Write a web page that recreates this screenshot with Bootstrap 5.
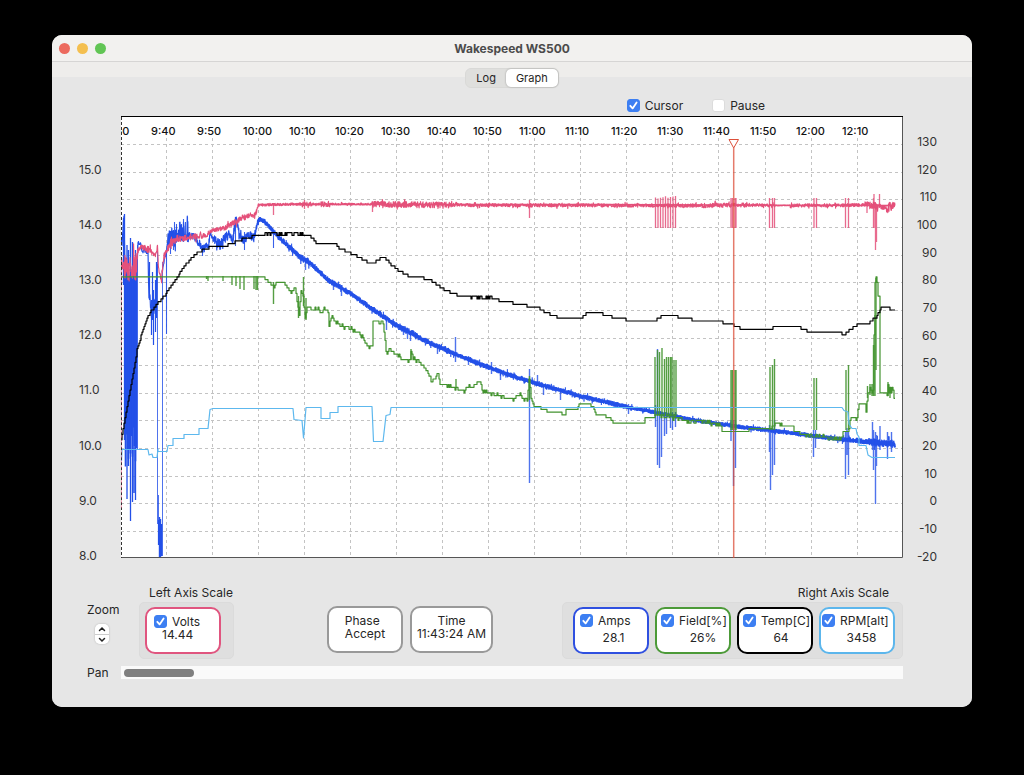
<!DOCTYPE html>
<html lang="en">
<head>
<meta charset="utf-8">
<meta name="viewport" content="width=device-width, initial-scale=1">
<title>Wakespeed WS500</title>
<link href="https://cdn.jsdelivr.net/npm/bootstrap@5.3.0/dist/css/bootstrap.min.css" rel="stylesheet">
<style>
  body { background: #000; color: #262626; font-family: Inter, "Liberation Sans", sans-serif; font-size: 12px; line-height: 13px; padding: 35px 52px; }
  .app-window { background: #e6e6e6; border-radius: 10px; }
  .titlebar { background: #f2f1ef; height: 27px; padding: 0 7px; border-bottom: 1px solid #d6d5d4; color: #4b4b4b; }
  .lights { gap: 7px; width: 54px; }
  .light { width: 11px; height: 11px; border-radius: 50%; }
  .light-red { background: #ec6a5e; }
  .light-yellow { background: #f4bf4f; }
  .light-green { background: #61c554; }
  .workspace { background: linear-gradient(#eeedeb 15px, #e6e6e6 15px); padding-top: 6px; padding-bottom: 28px; }
  .tabs { background: #dfdfdd; border: 1px solid #d9d9d7; border-radius: 6px; }
  .tabs .nav-link { color: #262626; font-size: 11px; line-height: 18px; padding: 0 10px; border-radius: 5px; }
  .tabs .nav-link.active { background: #fff; color: #262626; box-shadow: 0 0 2px rgba(0,0,0,.35); }
  .chart-options { padding-right: 207px; margin-top: 10px; gap: 29px; height: 15px; }
  .chart-options label { margin-left: 5px; }
  .tick { width: 13px; height: 13px; margin: 0; flex: none; border: 1px solid #dcdcdc; }
  .tick.form-check-input[type=checkbox] { border-radius: 3px; }
  .tick:checked { background-color: #3d7ff2; border-color: #3d7ff2; background-size: 13px;
    background-image: url("data:image/svg+xml,%3csvg xmlns='http://www.w3.org/2000/svg' viewBox='0 0 13 13'%3e%3cpath fill='none' stroke='%23fff' stroke-width='1.8' stroke-linecap='round' stroke-linejoin='round' d='M3.3 6.8 5.6 9.4 9.6 3.5'/%3e%3c/svg%3e"); }
  .chart { width: 100%; height: auto; }
  .chart text { font-size: 12px; fill: #333; }
  .chart .times text { font-size: 11px; font-weight: 500; fill: #111; }
  .controls { padding: 17px 69px 0 35px; }
  .zoom-col { width: 52px; padding-top: 17px; }
  .stepper { width: 14px; margin: 8px 0 0 8px; border-radius: 5px; box-shadow: 0 0 2px rgba(0,0,0,.25); overflow: hidden; }
  .stepper .btn { height: 10px; border: 0; border-radius: 0; background: #fff; padding: 0; line-height: 0; }
  .stepper .btn + .btn { border-top: 1px solid #ccc; }
  .scale-title { margin: 0 0 3px 10px; }
  .scale-title-right { margin-right: 14px; }
  .well { background: #dfdfdf; border: 1px solid #dbdbdb; border-radius: 5px; padding: 4px 7px 4px 10px; gap: 6px; }
  .well-left { padding: 4px 12px 4px 5px; }
  .reading { width: 76px; height: 47px; background: #fff; border: 2px solid #999; border-radius: 10px; padding: 5px 0 0 4px; white-space: nowrap; overflow: hidden; }
  .reading-wide { width: 83px; }
  .reading label { margin-left: 5px; }
  .reading-plain { padding: 6px 0 0; }
  .r-volts { border-color: #e0557f; padding: 6px 0 0 7px; }
  .r-amps { border-color: #2f50e0; padding-left: 5px; }
  .r-field { border-color: #4c9a38; }
  .r-temp { border-color: #000; }
  .r-rpm { border-color: #5cb6ec; padding-left: 1px; }
  .phases { padding: 20px 0 0 24px; gap: 7px; }
  .pan-row { padding: 7px 69px 0 35px; }
  .pan-row label { width: 34px; flex: none; }
  .pan-bar { appearance: none; -webkit-appearance: none; background: #fafafa; height: 13px; padding: 0 3px; margin: 0; border: 0; }
  .pan-bar::-webkit-slider-runnable-track { height: 8px; background: transparent; }
  .pan-bar::-webkit-slider-thumb { -webkit-appearance: none; width: 70px; height: 8px; border-radius: 4px; background: #7f7f7f; border: 0; }
</style>
</head>
<body>
<div class="app-window overflow-hidden">
  <header class="titlebar d-flex align-items-center justify-content-between">
    <div class="d-flex lights">
      <span class="light light-red"></span><span class="light light-yellow"></span><span class="light light-green"></span>
    </div>
    <div class="fw-bold">Wakespeed WS500</div>
    <div class="lights"></div>
  </header>

  <main class="workspace">
    <div class="d-flex justify-content-center">
      <div class="nav nav-pills tabs" role="tablist">
        <button class="nav-link" type="button" role="tab" aria-selected="false">Log</button>
        <button class="nav-link active" type="button" role="tab" aria-selected="true">Graph</button>
      </div>
    </div>

    <div class="chart-options d-flex justify-content-end">
      <div class="d-flex align-items-center"><input class="form-check-input tick" type="checkbox" id="cursor" checked><label for="cursor">Cursor</label></div>
      <div class="d-flex align-items-center"><input class="form-check-input tick" type="checkbox" id="pause"><label for="pause">Pause</label></div>
    </div>

    <svg class="chart d-block" viewBox="52 113 920 456" role="img" aria-label="Volts, amps, field, temperature and RPM over time">
      <defs><clipPath id="plot"><rect x="121" y="117" width="782" height="441"/></clipPath></defs>
      <rect x="121" y="116" width="782" height="442" fill="#fff"/>
      <g id="grid" stroke="#c3c3c3" stroke-dasharray="3 3"></g>
      <g id="series" fill="none" stroke-linejoin="round" clip-path="url(#plot)"></g>
      <g id="times" class="times" clip-path="url(#plot)"></g>
      <path d="M121 116.5H903" stroke="#000"/>
      <path d="M902.5 117V557.5H121" fill="none" stroke="#555"/>
      <path d="M121.5 117V558" stroke="#333" stroke-dasharray="3 2"/>
      <path d="M121.5 270V510" stroke="#e0557f" stroke-dasharray="3 2" opacity=".5"/>
      <path d="M733.700 148V558" stroke="#dc4f3a" stroke-width="1.5" opacity=".75"/>
      <path d="M729 139.5H738.5L733.7 148Z" fill="#fff" stroke="#dc4f3a"/>
      <g id="leftAxis"></g>
      <g id="rightAxis" text-anchor="end"></g>
    </svg>

    <div class="controls d-flex">
      <div class="zoom-col">
        <div>Zoom</div>
        <div class="stepper d-flex flex-column">
          <button class="btn" type="button" aria-label="Zoom in"><svg width="8" height="6" viewBox="0 0 8 6"><path d="M1.5 4.5 4 2 6.500 4.5" fill="none" stroke="#222" stroke-width="1.500" stroke-linecap="round"/></svg></button>
          <button class="btn" type="button" aria-label="Zoom out"><svg width="8" height="6" viewBox="0 0 8 6"><path d="M1.5 1.5 4 4 6.500 1.5" fill="none" stroke="#222" stroke-width="1.500" stroke-linecap="round"/></svg></button>
        </div>
      </div>
      <div>
        <div class="scale-title">Left Axis Scale</div>
        <div class="well well-left d-flex">
          <div class="reading r-volts">
            <div class="d-flex align-items-center"><input class="form-check-input tick" type="checkbox" id="volts" checked><label for="volts">Volts</label></div>
            <div class="ps-2">14.44</div>
          </div>
        </div>
      </div>
      <div class="phases flex-grow-1 d-flex justify-content-center">
        <div class="reading reading-plain d-flex justify-content-center"><div>Phase<br>Accept</div></div>
        <div class="reading reading-wide reading-plain text-center">Time<br>11:43:24 AM</div>
      </div>
      <div>
        <div class="scale-title scale-title-right text-end">Right Axis Scale</div>
        <div class="well d-flex">
          <div class="reading r-amps">
            <div class="d-flex align-items-center"><input class="form-check-input tick" type="checkbox" id="amps" checked><label for="amps">Amps</label></div>
            <div class="text-center pt-1">28.1</div>
          </div>
          <div class="reading r-field">
            <div class="d-flex align-items-center"><input class="form-check-input tick" type="checkbox" id="field" checked><label for="field">Field[%]</label></div>
            <div class="text-center ps-3 pt-1">26%</div>
          </div>
          <div class="reading r-temp">
            <div class="d-flex align-items-center"><input class="form-check-input tick" type="checkbox" id="temp" checked><label for="temp">Temp[C]</label></div>
            <div class="text-center ps-2 pt-1">64</div>
          </div>
          <div class="reading r-rpm">
            <div class="d-flex align-items-center"><input class="form-check-input tick" type="checkbox" id="rpm" checked><label for="rpm">RPM[alt]</label></div>
            <div class="text-center ps-2 pt-1">3458</div>
          </div>
        </div>
      </div>
    </div>

    <div class="pan-row d-flex align-items-center">
      <label for="pan">Pan</label>
      <input class="pan-bar flex-grow-1" type="range" id="pan" min="0" max="100" value="0">
    </div>
  </main>
</div>

<script src="https://cdn.jsdelivr.net/npm/bootstrap@5.3.0/dist/js/bootstrap.bundle.min.js"></script>
<script>
const NS = 'http://www.w3.org/2000/svg';
const add = (id, tag, attrs, text) => {
  const el = document.createElementNS(NS, tag);
  for (const k in attrs) el.setAttribute(k, attrs[k]);
  if (text !== undefined) el.textContent = text;
  document.getElementById(id).appendChild(el);
};
let seed = 7;
const rnd = () => { seed = (seed * 16807) % 2147483647; return seed / 2147483647; };
const unit = 2.762;                       // height of one right-axis unit
const yOf = v => 503.3 - unit * v;

// grid and tick labels
for (let i = 0; i < 17; i++) {
  const x = Math.round(120.1 + 46.03 * i), t = 570 + 10 * i;
  if (i) add('grid', 'path', { d: `M${x + .5} 138V558` });
  add('times', 'text', { x: x - 15, y: 135 }, Math.floor(t / 60) + ':' + String(t % 60).padStart(2, '0'));
}
for (let v = 130; v >= -20; v -= 10) {
  const y = Math.round(yOf(v));
  if (v > -20) add('grid', 'path', { d: `M121 ${y + .5}H903` });
  add('rightAxis', 'text', { x: 937, y: y + 2 }, v);
}
for (let v = 15; v >= 8; v--) add('leftAxis', 'text', { x: 79, y: Math.round(173.500 + (15 - v) * 55.2) }, v.toFixed(1));

// points are [x, y, noise]; noise carries on to the next point that sets it
const sample = (pts, step, fn) => {
  let a = 0;
  for (let i = 0; i < pts.length - 1; i++) {
    const [x0, y0] = pts[i], [x1, y1] = pts[i + 1];
    if (pts[i][2] !== undefined) a = pts[i][2];
    for (let x = x0; x < x1; x += step) fn(x, y0 + (y1 - y0) * (x - x0) / (x1 - x0), a);
  }
};
const noisy = (pts, step) => {
  let d = '';
  sample(pts, step, (x, y, a) => {
    const r = rnd() * 2 - 1, big = rnd() > .94 ? 1.9 : 1;
    d += (d ? 'L' : 'M') + x.toFixed(1) + ' ' + (y + r * a * big).toFixed(1);
  });
  return d;
};
const stairs = (pts) => {
  let d = '', last;
  sample(pts, 1, (x, y, a) => {
    const q = (503.3 - Math.round((503.3 - y - (rnd() - .5) * a) / unit) * unit).toFixed(1);
    if (q !== last) d += d ? `H${x}V${q}` : `M${x} ${q}`;
    last = q;
  });
  return d + 'H' + pts[pts.length - 1][0];
};
const spikes = list => list.map(([x, a, b]) => `M${x} ${a}V${b}`).join('');
const draw = (stroke, d, w = 1, o = 1) => add('series', 'path', { d, stroke, 'stroke-width': w, opacity: o });

const BLUE = '#2350e8', PINK = '#e4507a', GREEN = '#43932f', CYAN = '#5db8ee';

// amps
const block = [];
for (let x = 125.500; x <= 136.500; x++) block.push([x, 268 + rnd() * 10, 425 + rnd() * 45]);
draw(BLUE, spikes(block), 1.6);
draw(BLUE, spikes([[124.5, 214, 440], [123.5, 218, 285], [127, 245, 499], [128.500, 250, 466], [130.500, 238, 521], [132.500, 242, 502], [134, 270, 493], [135.500, 250, 500], [126, 258, 410]]), 1.3);
draw(BLUE, spikes([[137.500, 245, 450]]), 1, .8);
draw(BLUE, noisy([[121,240,0],[122,243,3],[124,216,0],[125,270,0],[137,270,0],[138,243,2],[140,243,2],[142,250,3],[146,252,3],[148,256,6],[149,298,7],[152,306,12],[156,302,12],[157,270,0],[158,258,0]], .5), 1.2);
draw(BLUE, spikes([[151.500, 300, 335], [153.500, 290, 345], [155.500, 280, 332], [156.500, 262, 318], [152.500, 272, 320], [149.500, 262, 300], [158.500, 520, 545]]), 1.200);
draw(BLUE, spikes([[157.500, 246, 524], [162.500, 262, 556], [158.500, 495, 524]]), 1, .8);
draw(BLUE, spikes([[159.500, 517, 557], [160.500, 519, 558], [161.500, 524, 556]]), 1.4);
draw(BLUE, noisy([[162,272,2],[165,256,3],[167,250,4],[168,238,7],[173,234,10],[188,230,10],[188.5,235,3],[195,237,4],[199,243,4],[202,248,5],[206,248,5],[209,242,4],[210,232,3],[214,240,5],[220,245,5],[224,238,5],[229,235,4],[233,240,5],[235,222,5],[237,221,5],[239,236,4],[244,240,4],[249,235,4],[254,238,4],[256,230,3],[257,223,3],[260,218,2]], .25), 1.200);
draw(BLUE, spikes([[166.500, 250, 334], [170.500, 232, 254], [173.500, 230, 250], [174.500, 222, 246], [176.500, 224, 242], [179.500, 222, 240], [181.500, 224, 240], [183.500, 219, 242], [185.500, 222, 240], [187.500, 217, 242], [235.500, 217, 246], [244.500, 232, 250], [202.500, 245, 256], [273.500, 232, 248]]), 1.1, .9);
const ampsRun = [[258,221,2.6],[260,219],[265,222],[276,234,3],[288,246],[300,257,3.6],[310,263,3],[328,280],[350,293],[372,309],[396,325,3.6],[420,338,3],[450,352,2.600],[480,364],[500,371.500],[520,378.500],[540,384.500],[580,396],[627,407,2.2],[653,412],[700,421],[733,426,2.4],[767,430],[813,436],[857,441,3],[868,442,4],[895,444,4]];
draw(BLUE, noisy(ampsRun, .2), 1, .75);
draw(BLUE, noisy(ampsRun.map(([x, y, a]) => [x, y, a && a * .5]), .3), 2);
draw(BLUE, spikes([[529.500, 369, 483], [455.500, 337, 362], [537.500, 375, 386], [543.500, 386, 395], [560.500, 390, 400], [305.500, 258, 270], [341.500, 285, 296], [386.500, 318, 330], [491.500, 362, 374], [628.500, 404, 414], [333.500, 282, 290], [403.500, 326, 335], [407.500, 330, 339], [410.500, 332, 341], [437.500, 346, 354], [468.500, 356, 365], [500.500, 370, 380],
  [655.500, 405, 427], [657.500, 349, 465], [659.500, 412, 468], [661.500, 412, 457], [664.500, 412, 436], [666.500, 412, 434], [670.500, 412, 428], [672.500, 412, 430], [675.500, 412, 427],
  [731, 420, 441], [733.500, 420, 486], [735.500, 420, 468], [770.500, 428, 490], [769.500, 425, 452], [772.500, 428, 475], [774.500, 420, 465], [813.500, 430, 457], [815.500, 430, 448], [845.500, 432, 479], [848.500, 432, 475], [847, 428, 455], [872.500, 422, 450], [873.500, 430, 470], [875.500, 432, 504], [876.500, 435, 466], [887.500, 432, 459], [891.500, 432, 452], [880, 426, 450]]), 1.4, .8);

// volts
draw(PINK, noisy([[121,262,6],[124,268,13],[137,268,13],[137.5,250,2],[141,247,2.5],[147,249,3.5],[156,254,3],[157.5,246,1],[158.5,268,2],[161.500,281,4],[163,262,3],[166,252,4],[170,243,4],[178,239,3],[190,237],[205,236,2.500],[212,231],[222,229],[232,224,3],[242,218],[252,215],[256,214],[258,205,1.3],[300,204,2],[312,204,1],[321,204,3],[330,204,1],[372,204,3.2],[440,205,3],[452,205,1.7],[640,205.500,1.7],[700,205.500,2.300],[745,205,1.7],[775,205.500,.4],[790,205.500,1.7],[865,205,3.5],[878,206,2.500],[886,208,5],[895,206,2]], .3), 1.1);
draw(PINK, 'M258 204.500H600L895 205.500', 1.3);
const vd = [[273.500,203,215],[372.500,202,212],[529.500,200,218],[304.500,200,209]];
for (const x of [655.5, 658, 660.5, 663, 665.5, 668, 670.5, 673, 675.5]) vd.push([x, 196 + rnd() * 4, 228]);
for (const x of [731, 732.5, 735, 736, 769.500, 772.500, 774.500, 814, 816.500, 845.500, 848.500, 873.500]) vd.push([x, 198, 228]);
vd.push([874, 194, 228], [875.500, 204, 250], [876.500, 204, 242], [879.500, 194, 208], [867, 204, 213]);
draw(PINK, spikes(vd), 1.3, .85);

// field
draw(GREEN, stairs([[121,276],[262,276],[266,279],[274,287],[276,283],[280,281],[286,285],[291,293],[295,287],[299,315],[301,290],[303,296],[305,318],[307,307,3],[312,310],[316,308],[322,313],[324,308],[328,312],[329,325],[331,317],[337,322],[343,327],[350,327],[357,333],[362,337],[367,346],[372,347],[373,321],[383,323],[385,340],[386,353],[390,349],[396,354],[402,359],[410,361],[411,350],[413,358],[422,364],[427,372],[432,381],[438,375],[440,384],[450,386],[464,391],[468,386],[475,385],[480,381],[483,392],[494,394],[503,397],[514,400],[516,396],[520,393],[522,399],[527,400],[529,378],[531,397],[534,408,0],[540,408],[547,411],[558,412],[565,415],[566,409],[578,408],[579,404],[584,403],[593,406],[596,414],[608,417],[614,423],[644,423],[645,418],[654,417],[656,415,4],[677,418,5],[686,422,5],[700,421,4],[721,426,0],[722,432],[746,432],[750,429],[770,429],[775,424,3],[781,424],[782,426,0],[793,426],[794,431],[806,435,4],[825,437,4],[840,438],[844,432,3],[849,430],[850,419],[856,419],[858,412],[859,404,0],[865,404],[866,412],[868,392,6],[873,390,6],[875,282,0],[876,277],[877,282],[878,295],[879,297],[880,392,2],[887,394,2],[888,388,9],[892,392,9],[894,398,0],[895,398]]), 1.2);
const fs = [[206.500,276,279],[208,276,281],[223,276,281],[232,276,285],[236,276,286],[240,276,289],[244,276,290],[254,276,289],[256,276,290],[257.500,276,290],[273.500,282,304],[298.500,296,318],[303.500,277,306],[306,298,320],[456,379,388],[529.500,376,400],[411,349,360]];
[[655,357],[657.500,350],[659.500,352],[662,348],[664.500,359],[666.500,357],[668.500,357],[670.500,357],[672,357],[674,360],[676,360]].forEach(([x, y]) => fs.push([x, y, 416]));
[[731,370],[732.500,370],[735,370],[736,370],[770,367],[772.500,365],[774.500,359],[814,378],[816.500,378],[846,370],[848.500,365]].forEach(([x, y]) => fs.push([x, y, 430]));
fs.push([867.500, 386, 398], [870, 384, 395], [872, 384, 396], [873.500, 345, 396], [875, 315, 396], [876, 278, 370], [888, 382, 396], [890, 387, 398]);
draw(GREEN, spikes(fs), 1.4, .9);

// rpm
draw(CYAN, 'M121.5 461L122 449.500H148L149 455L152 454L153 457.500H157L158 449V451.500H167L168 445.500H173V438.500H184V434.500H199V428.500H208L210 409.500L213 408.500H293L294 419.500L302 420.500L303.500 438L305 420L306 407.500H321V418.500H330V412.500H338V406.500H372L373.500 441.500H383L386 415.500L390 414.500L391 407.500H842L844 410.500L848 412L849 424L852 428.500H856L857 434L859 437V445.500H866L868 455L872 457.500H895', 1.2);

// temperature
draw('#000', stairs([[121,440],[125,418],[130,390],[137,350],[143,328],[150,312],[158,303],[165,295],[175,280],[185,265],[195,254],[206,248],[222,247],[235,242],[245,238],[255,236,1],[265,234],[304,234],[312,238],[316,243],[335,243],[340,249],[350,253],[360,258],[367,262],[373,264],[378,260],[384,257],[390,264],[398,270],[409,276,0],[420,277],[430,280],[437,285],[445,290],[452,293],[460,296],[470,297,2],[492,298,0],[504,302],[520,304],[527,306],[538,308],[545,312],[552,315],[560,318],[582,318],[583,315],[590,312],[602,312],[603,315],[616,318],[628,320],[656,320],[658,318],[664,315],[670,316,2],[678,317,0],[691,318],[692,320],[722,320],[723,323],[733,325],[740,328],[772,328],[773,326],[800,326],[801,329],[808,331],[836,331],[838,333],[845,334],[848,331],[855,326],[860,323],[869,323],[872,320],[876,317],[879,312],[881,307],[888,307],[890,309],[894,309],[895,312]]), 1.2);
</script>
</body>
</html>
